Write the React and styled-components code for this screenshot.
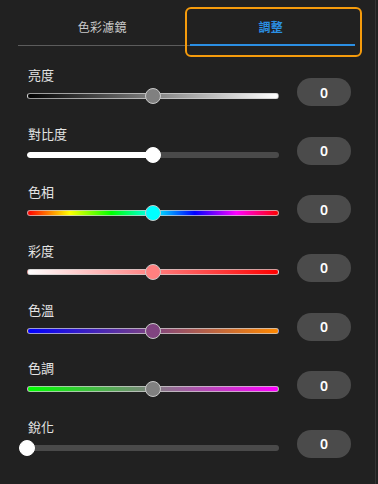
import React, { useState } from "react";
import styled, { createGlobalStyle } from "styled-components";

const GlobalStyle = createGlobalStyle`
  html, body {
    margin: 0;
    padding: 0;
    background: #212121;
  }
  body {
    font-family: "Noto Sans CJK TC", "Noto Sans", sans-serif;
  }
`;

const Panel = styled.div`
  width: 376px;
  height: 484px;
  box-sizing: border-box;
  background: #212121;
  border-right: 1px solid #333333;
  overflow: hidden;
`;

const TabList = styled.div`
  display: grid;
  grid-template-columns: 1fr 1fr;
  margin: 8px 20px 0 18px;
  border-bottom: 1px solid #5c5c5c;
`;

const Tab = styled.div`
  position: relative;
  height: 37px;
  display: flex;
  align-items: center;
  justify-content: center;
  font-size: 12px;
  font-weight: ${(p) => (p.$active ? 700 : 400)};
  color: ${(p) => (p.$active ? "#2b8fe3" : "#c9c9c9")};
  letter-spacing: 0.3px;

  ${(p) =>
    p.$active &&
    `
    &::before {
      content: "";
      position: absolute;
      left: 3px;
      right: 0;
      bottom: -1px;
      height: 2px;
      background: #2b8fe3;
    }
    &::after {
      content: "";
      position: absolute;
      left: -2px;
      right: -7px;
      top: -1px;
      bottom: -12px;
      border: 2.5px solid #f59b0c;
      border-radius: 6px;
    }
  `}
`;

const List = styled.div`
  display: flex;
  flex-direction: column;
  gap: 18.67px;
  margin: 20px 0 0 27px;
`;

const Row = styled.div`
  display: grid;
  grid-template-columns: 252px 54px;
  column-gap: 18px;
  align-items: end;
`;

const Control = styled.div`
  display: flex;
  flex-direction: column;
  gap: 2px;
`;

const Label = styled.div`
  font-size: 13px;
  line-height: 18px;
  color: #e4e4e4;
  padding-left: 1px;
`;

const Slider = styled.div`
  position: relative;
  height: 20px;
  display: flex;
  align-items: center;
`;

const Track = styled.div`
  position: relative;
  width: 100%;
  height: 6px;
  box-sizing: border-box;
  border-radius: 3px;
  background: ${(p) => p.$bg || "#4a4a4a"};
  border: ${(p) => (p.$bg ? "1px solid rgba(205,205,205,0.75)" : "none")};
  overflow: hidden;
`;

const Fill = styled.div`
  height: 100%;
  background: #ffffff;
  border-radius: 3px;
`;

const Thumb = styled.div`
  position: absolute;
  top: 50%;
  width: 16px;
  height: 16px;
  box-sizing: border-box;
  border-radius: 50%;
  transform: translate(-50%, -50%);
  background: ${(p) => p.$color};
  border: 1px solid ${(p) => (p.$plain ? p.$color : "#c9c9c9")};
`;

const Value = styled.div`
  height: 28px;
  border-radius: 14px;
  background: #4b4b4b;
  color: #ffffff;
  font-family: "Noto Sans", sans-serif;
  font-size: 14px;
  font-weight: 600;
  display: flex;
  align-items: center;
  justify-content: center;
`;

const rows = [
  { label: "亮度", bg: "linear-gradient(to right, #000000, #ffffff)", thumb: "#808080", pos: 0.5 },
  { label: "對比度", plain: true, thumb: "#ffffff", pos: 0.5 },
  {
    label: "色相",
    bg: "linear-gradient(to right, #ff0000, #ffff00, #00ff00, #00ffff, #0000ff, #ff00ff, #ff0000)",
    thumb: "#00ffff",
    pos: 0.5,
  },
  { label: "彩度", bg: "linear-gradient(to right, #ffffff, #ff0000)", thumb: "#ff8080", pos: 0.5 },
  { label: "色溫", bg: "linear-gradient(to right, #0000ff, #ff8800)", thumb: "#804480", pos: 0.5 },
  { label: "色調", bg: "linear-gradient(to right, #00ff00, #ff00ff)", thumb: "#808080", pos: 0.5 },
  { label: "銳化", plain: true, thumb: "#ffffff", pos: 0 },
];

export default function App() {
  const [tab] = useState(1);

  return (
    <>
      <GlobalStyle />
      <Panel>
        <TabList>
          <Tab $active={tab === 0}>色彩濾鏡</Tab>
          <Tab $active={tab === 1}>調整</Tab>
        </TabList>
        <List>
          {rows.map((r) => (
            <Row key={r.label}>
              <Control>
                <Label>{r.label}</Label>
                <Slider>
                  <Track $bg={r.bg}>
                    {r.plain && <Fill style={{ width: `${r.pos * 100}%` }} />}
                  </Track>
                  <Thumb
                    $color={r.thumb}
                    $plain={r.plain}
                    style={{ left: `${r.pos * 100}%` }}
                  />
                </Slider>
              </Control>
              <Value>0</Value>
            </Row>
          ))}
        </List>
      </Panel>
    </>
  );
}
